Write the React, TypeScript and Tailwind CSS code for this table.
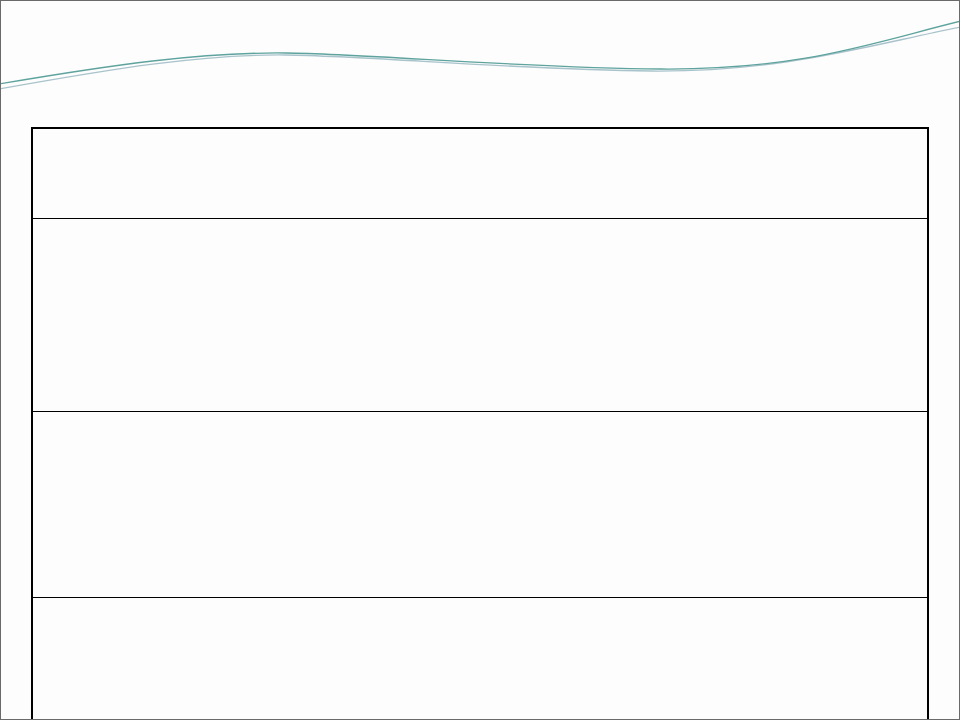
export default function App() {
  return (
    <div className="w-[960px] h-[720px] overflow-hidden border border-[#6a6a6a] bg-[#fdfdfd] flex flex-col">
      {/* decorative wave header */}
      <svg width="958" height="126" viewBox="0 0 958 126" className="block shrink-0">
        <path
          d="M-2,88 C110,68 200,53 285,54 S520,69 650,70 S860,46 960,26"
          fill="none"
          stroke="#a8c3cb"
          strokeWidth="1.3"
        />
        <path
          d="M-2,83 C110,64 200,51 285,52 S520,67 660,68 S870,42 960,20"
          fill="none"
          stroke="#5ea39d"
          strokeWidth="1.3"
        />
      </svg>

      <div className="pl-[30px] pr-[30px]">
        <div className="border-2 border-black w-[898px] flex flex-col">
          <div className="h-[90px] border-b border-black" />
          <div className="h-[193px] border-b border-black" />
          <div className="h-[186px] border-b border-black" />
          <div className="h-[200px]" />
        </div>
      </div>
    </div>
  );
}
